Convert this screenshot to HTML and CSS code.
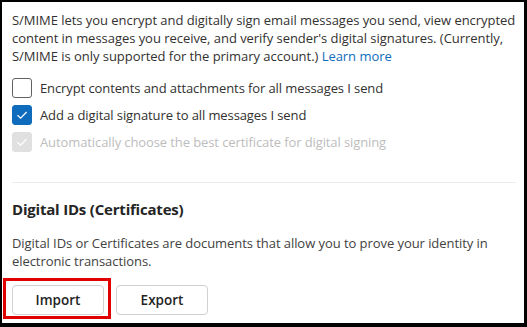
FILE: index.html
```html
<!DOCTYPE html>
<html lang="en">
<head>
  <meta charset="UTF-8">
  <meta name="viewport" content="width=device-width, initial-scale=1.0">
  <title>S/MIME settings</title>
  <link rel="stylesheet" href="styles.css">
</head>
<body>

<div class="panel">
  <p class="intro">
    S/MIME lets you encrypt and digitally sign email messages you send, view encrypted content in messages you receive, and verify sender's digital signatures. (Currently, S/MIME is only supported for the primary account.) <a href="#" class="link">Learn more</a>
  </p>

  <div class="options">
    <label class="option">
      <span class="box"></span>
      <span>Encrypt contents and attachments for all messages I send</span>
    </label>
    <label class="option">
      <span class="box checked">
        <svg width="20" height="20" viewBox="0 0 20 20"><path d="M5.5 10.2 L8.6 13.2 L14.6 7" fill="none" stroke="#fff" stroke-width="1.2"/></svg>
      </span>
      <span>Add a digital signature to all messages I send</span>
    </label>
    <label class="option disabled">
      <span class="box checked">
        <svg width="20" height="20" viewBox="0 0 20 20"><path d="M5.5 10.2 L8.6 13.2 L14.6 7" fill="none" stroke="#fff" stroke-width="1.2"/></svg>
      </span>
      <span>Automatically choose the best certificate for digital signing</span>
    </label>
  </div>

  <hr class="divider">

  <h2 class="section-title">Digital IDs (Certificates)</h2>
  <p class="section-text">Digital IDs or Certificates are documents that allow you to prove your identity in electronic transactions.</p>

  <div class="actions">
    <button class="btn">Import</button>
    <button class="btn">Export</button>
    <span class="highlight"></span>
  </div>
</div>

</body>
</html>
```

FILE: styles.css
```css
/* Page frame */
body {
  margin: 0;
  padding: 2px 3px 4px 2px;
  background-color: #000;
  font-family: 'Open Sans', sans-serif;
  font-size: 13px;
  color: #323130;
}

.panel {
  height: 321px;
  box-sizing: border-box;
  padding: 9px 8px 0 10px;
  background-color: #fff;
  overflow: hidden;
}

/* Intro text */
.intro {
  margin: 0;
  line-height: 18px;
  letter-spacing: -0.04px;
}

.link {
  color: #0f6cbd;
  text-decoration: none;
}

/* Checkboxes */
.options {
  display: flex;
  flex-direction: column;
  gap: 7px;
  margin-top: 13px;
}

.option {
  display: flex;
  align-items: center;
  gap: 8px;
  height: 20px;
  letter-spacing: -0.1px;
}

.box {
  width: 18px;
  height: 18px;
  border: 1px solid #616161;
  border-radius: 3px;
  box-sizing: content-box;
  position: relative;
}

.box svg {
  position: absolute;
  top: -1px;
  left: -1px;
}

.box.checked {
  background-color: #0f6cbd;
  border-color: #0f6cbd;
}

.option.disabled {
  color: #bdbdbd;
}

.option.disabled .box {
  background-color: #e0e0e0;
  border-color: #e0e0e0;
}

/* Divider */
.divider {
  margin: 30px 0 0 0;
  border: none;
  border-top: 1px solid #edebe9;
}

/* Digital IDs section */
.section-title {
  margin: 15px 0 0 0;
  font-size: 15px;
  font-weight: 700;
  line-height: 22px;
  letter-spacing: -0.2px;
  color: #242424;
}

.section-text {
  margin: 14px 0 0 0;
  line-height: 18px;
  letter-spacing: -0.06px;
  color: #424242;
}

.actions {
  position: relative;
  display: flex;
  gap: 12px;
  margin-top: 15px;
}

.btn {
  width: 92px;
  height: 30px;
  padding: 0;
  background-color: #fff;
  border: 1px solid #d1d1d1;
  border-radius: 4px;
  font-family: 'Open Sans', sans-serif;
  font-size: 13.5px;
  font-weight: 600;
  color: #242424;
}

/* Red annotation box round the Import button */
.highlight {
  position: absolute;
  left: -9px;
  top: -7px;
  width: 102px;
  height: 35px;
  border: 3px solid #e00000;
}
```
